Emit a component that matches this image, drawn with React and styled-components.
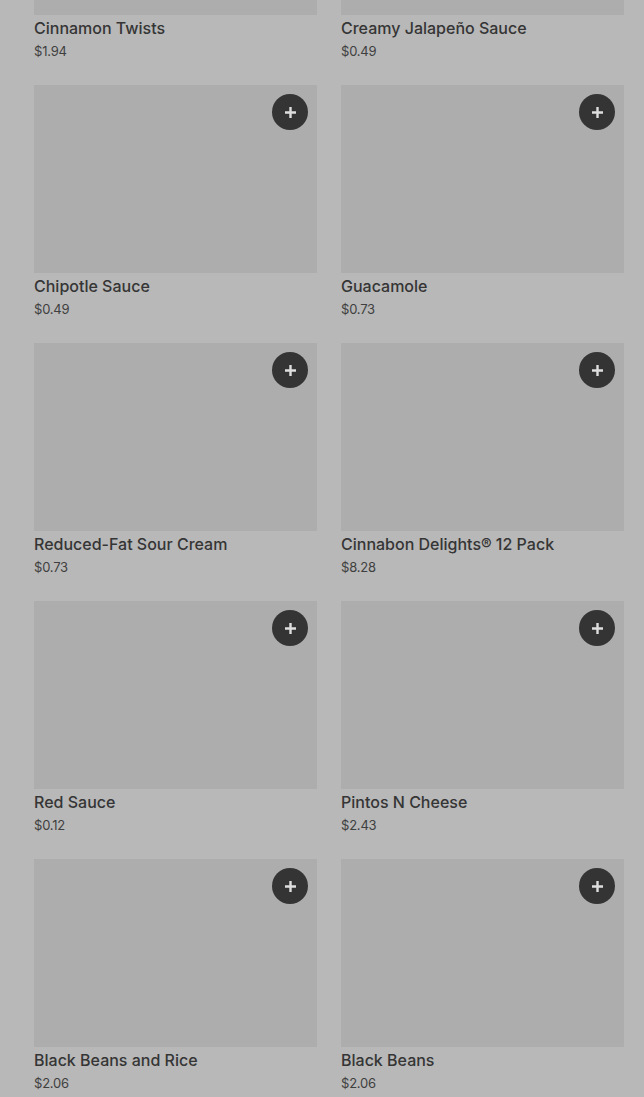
import React from "react"
import styled, { createGlobalStyle } from "styled-components"

const items = [
  { name: "Cinnamon Twists", price: "$1.94" },
  { name: "Creamy Jalapeño Sauce", price: "$0.49" },
  { name: "Chipotle Sauce", price: "$0.49" },
  { name: "Guacamole", price: "$0.73" },
  { name: "Reduced-Fat Sour Cream", price: "$0.73" },
  { name: "Cinnabon Delights® 12 Pack", price: "$8.28" },
  { name: "Red Sauce", price: "$0.12" },
  { name: "Pintos N Cheese", price: "$2.43" },
  { name: "Black Beans and Rice", price: "$2.06" },
  { name: "Black Beans", price: "$2.06" },
]

const GlobalStyle = createGlobalStyle`
  html, body {
    margin: 0;
    padding: 0;
    background: #b8b8b8;
    overflow: hidden;
  }
  body {
    font-family: Inter, "Liberation Sans", sans-serif;
    color: #2e2e2e;
  }
`

const PlusIcon = () => (
  <svg width="13" height="13" viewBox="0 0 13 13" fill="none">
    <path d="M6.5 1v11M1 6.5h11" stroke="#dedede" strokeWidth="2.4" />
  </svg>
)

export default function App() {
  return (
    <>
      <GlobalStyle />
      <S.Page>
        <S.Grid>
          {items.map((item) => (
            <S.Card key={item.name}>
              <S.Image>
                <S.AddButton aria-label={`Add ${item.name}`}>
                  <PlusIcon />
                </S.AddButton>
              </S.Image>
              <S.Title>{item.name}</S.Title>
              <S.Price>{item.price}</S.Price>
            </S.Card>
          ))}
        </S.Grid>
      </S.Page>
    </>
  )
}

const S = {
  Page: styled.div`
    height: 1097px;
    overflow: hidden;
    padding: 0 20px 0 34px;
  `,
  Grid: styled.div`
    margin-top: -173px;
    display: grid;
    grid-template-columns: 283px 283px;
    column-gap: 24px;
    row-gap: 24px;
  `,
  Card: styled.div`
    display: flex;
    flex-direction: column;
  `,
  Image: styled.div`
    position: relative;
    height: 188px;
    background: #adadad;
  `,
  AddButton: styled.button`
    position: absolute;
    top: 9px;
    right: 9px;
    width: 36px;
    height: 36px;
    border: none;
    border-radius: 50%;
    background: #343434;
    display: flex;
    align-items: center;
    justify-content: center;
    padding: 0;
  `,
  Title: styled.div`
    margin-top: 3px;
    font-size: 16px;
    font-weight: 500;
    line-height: 20px;
    color: #353535;
  `,
  Price: styled.div`
    margin-top: 3px;
    font-size: 13px;
    line-height: 20px;
    color: #3f3f3f;
    letter-spacing: -0.2px;
  `,
}
